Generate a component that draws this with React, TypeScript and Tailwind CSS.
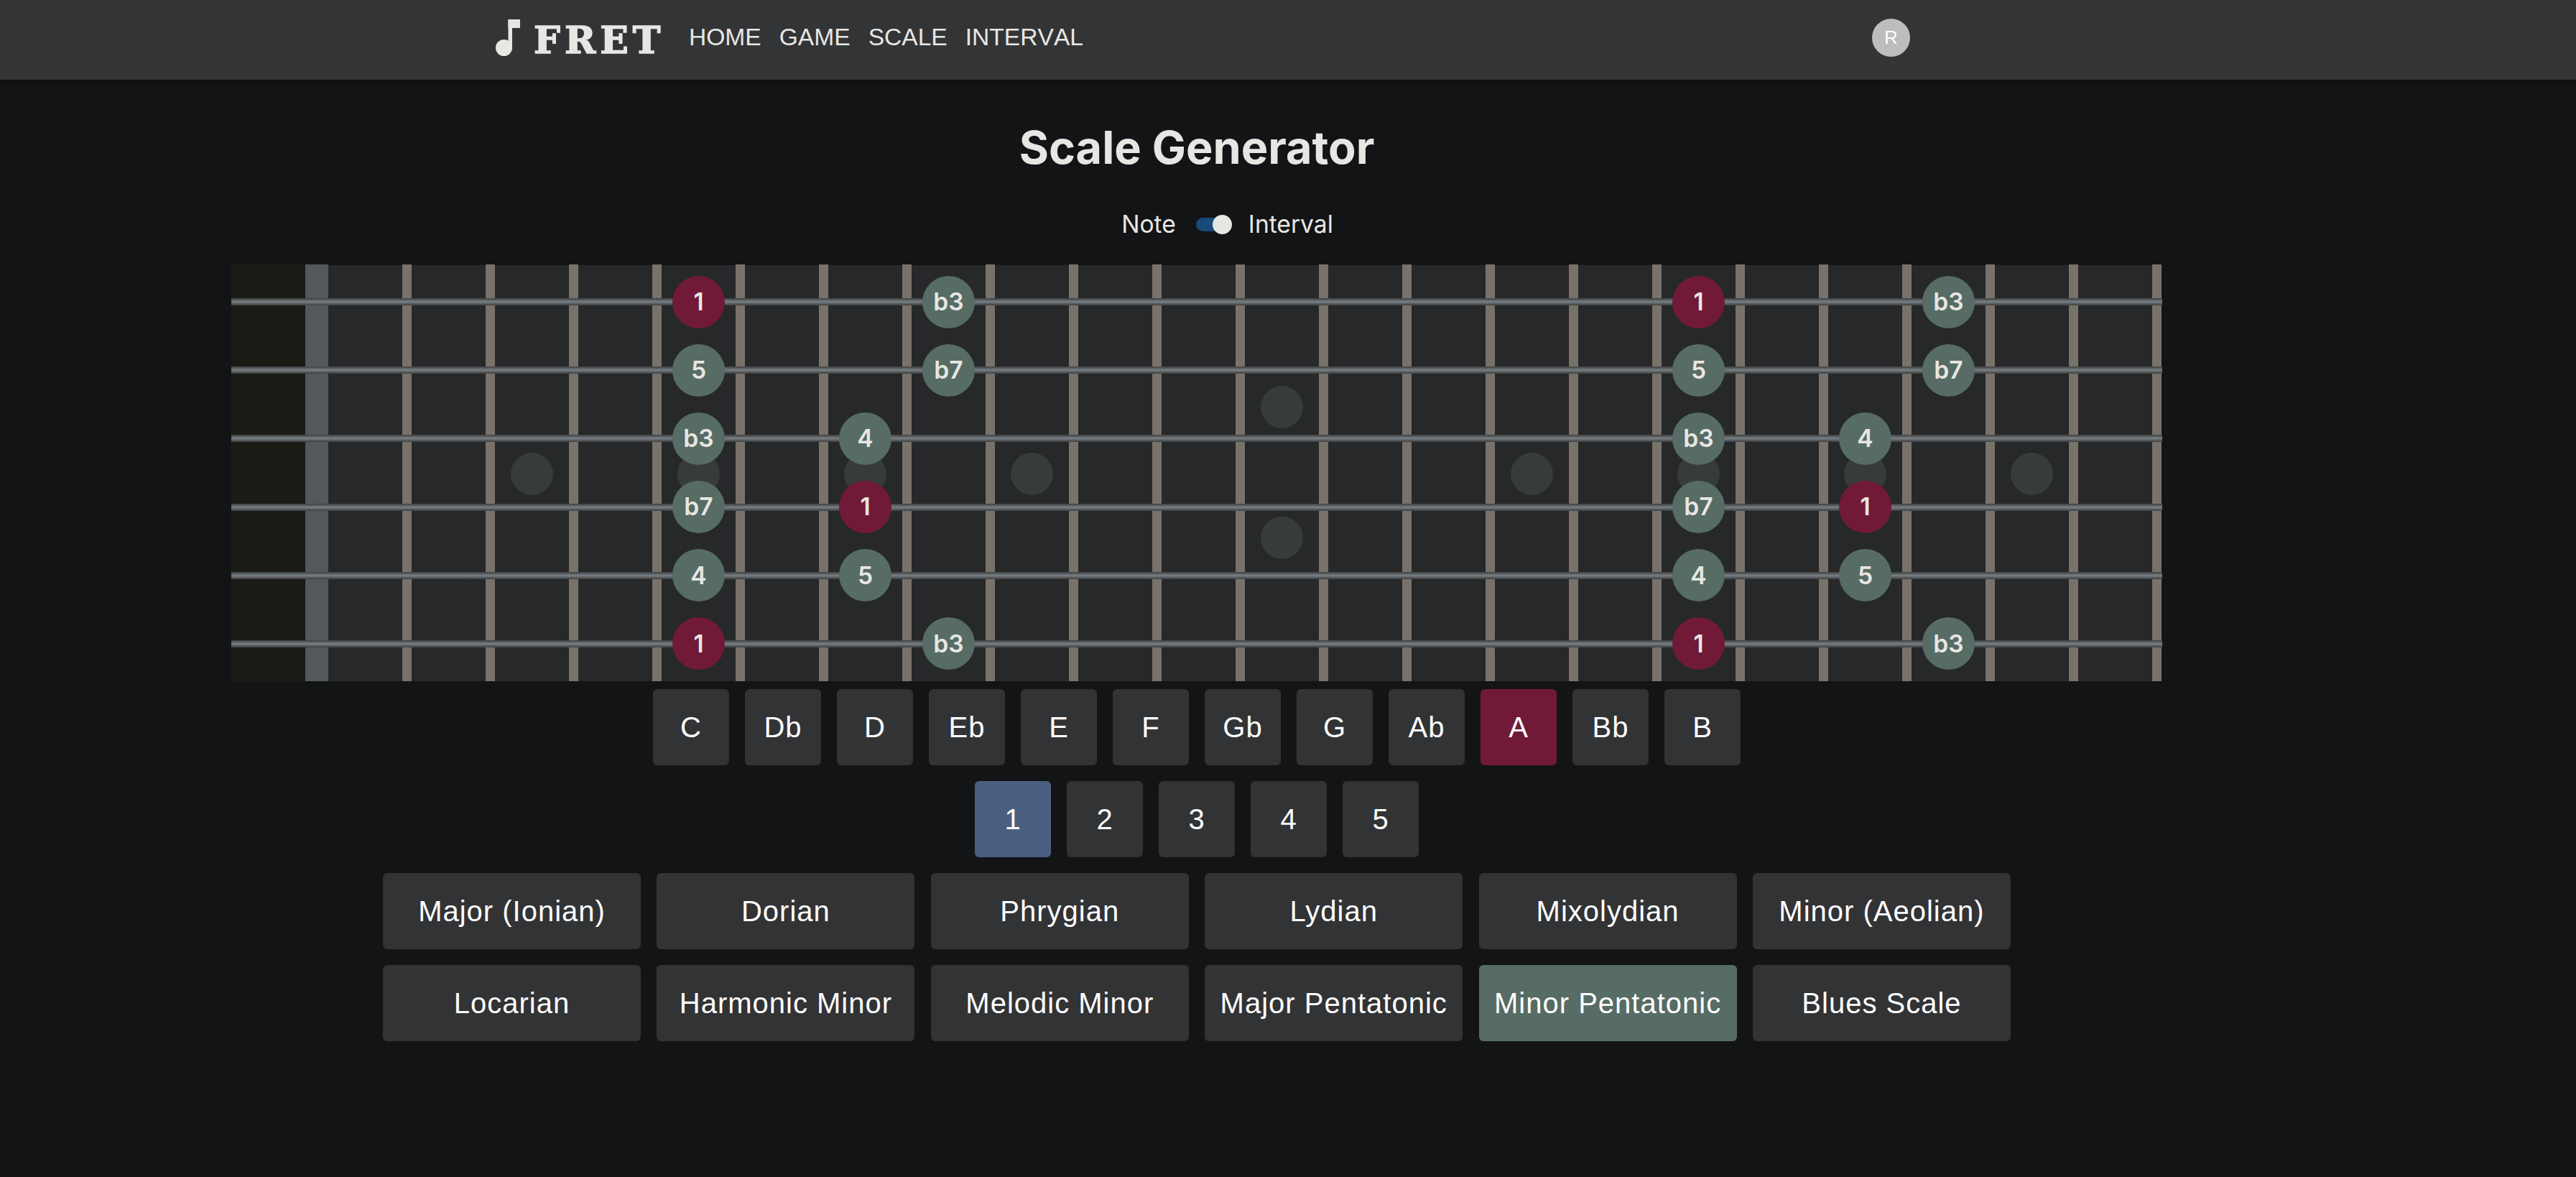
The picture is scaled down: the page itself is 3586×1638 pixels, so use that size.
const ROOTS = ["C", "Db", "D", "Eb", "E", "F", "Gb", "G", "Ab", "A", "Bb", "B"];
const POSITIONS = ["1", "2", "3", "4", "5"];
const SCALES = [
  "Major (Ionian)", "Dorian", "Phrygian", "Lydian", "Mixolydian", "Minor (Aeolian)",
  "Locarian", "Harmonic Minor", "Melodic Minor", "Major Pentatonic", "Minor Pentatonic", "Blues Scale",
];
const CELLS = Array.from({ length: 22 }, (_, i) => i);
const STRINGS: Record<number, string>[] = [
  { 4: "1", 7: "b3", 16: "1", 19: "b3" },
  { 4: "5", 7: "b7", 16: "5", 19: "b7" },
  { 4: "b3", 6: "4", 16: "b3", 18: "4" },
  { 4: "b7", 6: "1", 16: "b7", 18: "1" },
  { 4: "4", 6: "5", 16: "4", 18: "5" },
  { 4: "1", 7: "b3", 16: "1", 19: "b3" },
];
const SINGLE_DOTS = [2, 4, 6, 8, 14, 16, 18, 20];

function Btn({ label, active, wide }: { label: string; active?: string; wide?: boolean }) {
  return (
    <button
      className={`h-[106px] rounded-[6px] text-[40px] tracking-[1px] text-white ${wide ? "w-[359px]" : "w-[106px]"} ${active ?? "bg-[#323335]"}`}
    >
      {label}
    </button>
  );
}

export default function App() {
  return (
    <div className="min-h-[1638px] bg-[#131416] font-['Liberation_Sans',sans-serif] text-[#e8e6e3]">
      <header className="flex h-[111px] items-center bg-[#333436] pb-[6px] pl-[690px] shadow-[0_2px_6px_rgba(0,0,0,0.4)]">
        <svg width="34" height="51" viewBox="0 0 34 51" fill="#e8e6e3">
          <rect x="17.5" y="0" width="16.5" height="12" />
          <rect x="17.5" y="0" width="5.5" height="42" />
          <ellipse cx="11.5" cy="39.5" rx="11.5" ry="11.5" />
        </svg>
        <span className="ml-[19px] w-[198px] translate-y-[3px] font-['DejaVu_Serif',serif] text-[52px] leading-none font-bold tracking-[6px] text-[#e8e6e3] [-webkit-text-stroke:1.5px_#e8e6e3]">
          FRET
        </span>
        <nav className="ml-[18px] flex gap-[25px] text-[33.6px] [font-kerning:none]">
          <span>HOME</span>
          <span>GAME</span>
          <span>SCALE</span>
          <span>INTERVAL</span>
        </nav>
        <div className="ml-[1098px] flex h-[53px] w-[53px] items-center justify-center rounded-full bg-[#bdbdbd] text-[25.6px] text-white">
          R
        </div>
      </header>

      <main className="ml-[322px] flex w-[2688px] flex-col items-center">
        <h1 className="mt-[54px] font-['Inter',sans-serif] text-[63px] leading-[80px] font-bold">Scale Generator</h1>
        <div className="mt-[44px] ml-[85px] flex h-[46px] items-center font-['Inter',sans-serif] text-[33.6px]">
          <span>Note</span>
          <span className="relative mr-[29px] ml-[28px] h-[19px] w-[44px] rounded-full bg-[#1a4a7a]">
            <span className="absolute top-[-4px] right-[-6px] h-[27px] w-[27px] rounded-full bg-[#e8e6e3]" />
          </span>
          <span>Interval</span>
        </div>

        <section className="relative mt-[33px] flex h-[580px] w-full">
          <div className="w-[103px] bg-[#1b1b16]" />
          <div className="w-[32px] bg-[#53585a]" />
          {CELLS.map((c) => (
            <div key={c} className="relative flex w-[116px]">
              <div className="mt-px flex flex-1 flex-col items-center justify-center gap-[123px] bg-[#27282a]">
                {SINGLE_DOTS.includes(c) && <span className="h-[59px] w-[59px] translate-y-px rounded-full bg-[#383b3c]" />}
                {c === 11 && (
                  <>
                    <span className="h-[59px] w-[59px] -translate-y-px rounded-full bg-[#383b3c]" />
                    <span className="h-[59px] w-[59px] -translate-y-px rounded-full bg-[#383b3c]" />
                  </>
                )}
              </div>
              <div className="w-[13px] bg-[#78726a]" />
            </div>
          ))}
          <div className="absolute inset-0 flex flex-col justify-between py-[47px]">
            {STRINGS.map((notes, s) => (
              <div
                key={s}
                className="flex h-[10px] items-center bg-[linear-gradient(to_bottom,#3c3f41,#5a5e61_25%,#7b8186_50%,#5a5e61_75%,#3c3f41)] pl-[135px]"
              >
                {CELLS.map((c) => (
                  <div key={c} className="flex h-[10px] w-[116px] items-center justify-center pr-[13px]">
                    {notes[c] && (
                      <span
                        className={`flex h-[73px] w-[73px] shrink-0 items-center justify-center rounded-full font-['Inter',sans-serif] text-[33.6px] font-semibold text-[#e8e6e3] ${notes[c] === "1" ? "bg-[#701a38]" : "bg-[#566c64]"}`}
                      >
                        {notes[c]}
                      </span>
                    )}
                  </div>
                ))}
              </div>
            ))}
          </div>
        </section>

        <div className="mt-[11px] flex gap-[22px]">
          {ROOTS.map((r) => (
            <Btn key={r} label={r} active={r === "A" ? "bg-[#701a38]" : undefined} />
          ))}
        </div>
        <div className="mt-[22px] flex gap-[22px]">
          {POSITIONS.map((p) => (
            <Btn key={p} label={p} active={p === "1" ? "bg-[#4a5f80]" : undefined} />
          ))}
        </div>
        <div className="mt-[22px] grid grid-cols-6 gap-x-[22.4px] gap-y-[22px]">
          {SCALES.map((s) => (
            <Btn key={s} label={s} wide active={s === "Minor Pentatonic" ? "bg-[#566c64]" : undefined} />
          ))}
        </div>
      </main>
    </div>
  );
}
